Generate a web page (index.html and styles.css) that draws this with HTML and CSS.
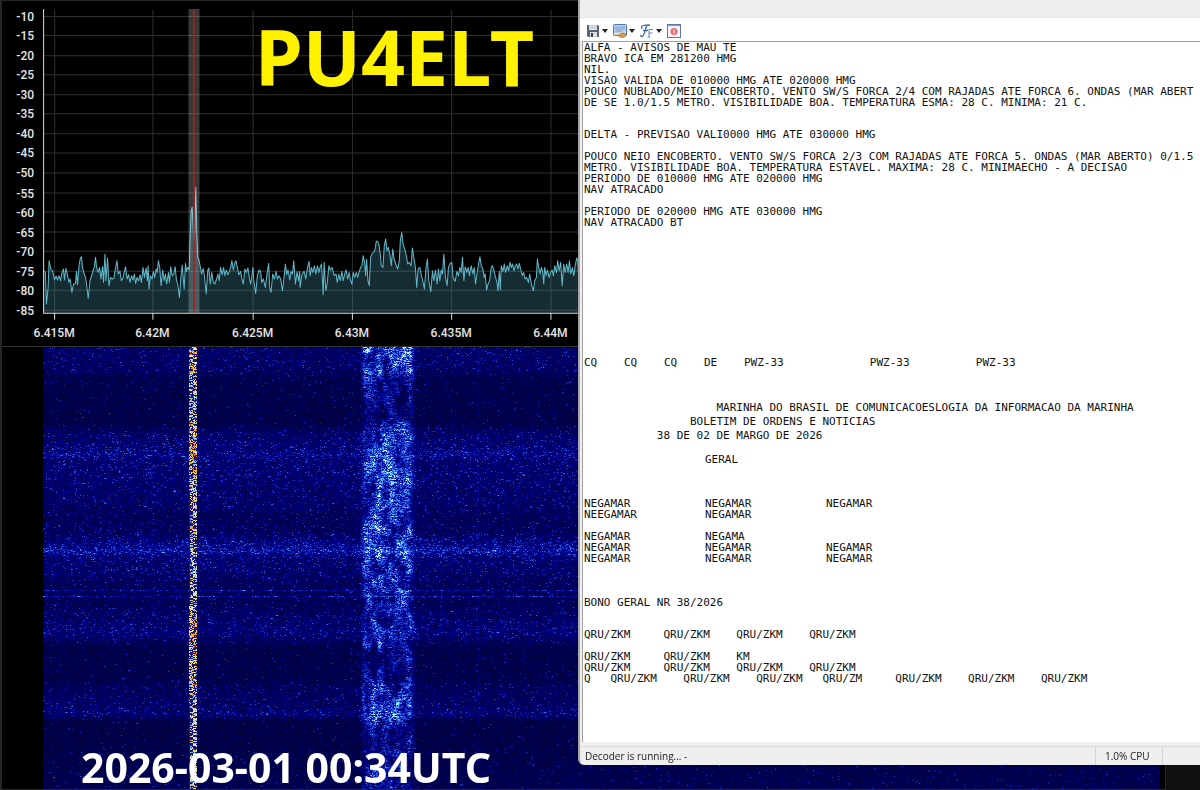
FILE: index.html
```html
<!DOCTYPE html>
<html lang="pt-BR">
<head>
    <meta charset="UTF-8">
    <meta name="viewport" content="width=device-width, initial-scale=1.0">
    <title>PU4ELT</title>
    <link rel="stylesheet" href="styles.css">
</head>
<body>

<main class="receiver">
    <div class="display">
        <svg id="spectrum" class="spectrum" viewBox="0 0 1160 346" preserveAspectRatio="xMinYMin slice"></svg>
        <div class="waterfall">
            <canvas id="waterfall"></canvas>
        </div>
    </div>
    <div class="side-panel"></div>
</main>

<h1 class="callsign">PU4ELT</h1>
<time class="timestamp" datetime="2026-03-01T00:34Z">2026-03-01 00:34UTC</time>

<section class="decoder">
    <div class="titlebar"></div>
    <div class="toolbar">
        <button type="button" aria-label="Save">
            <svg width="14" height="14" viewBox="0 0 14 14">
                <path d="M1 1h11l1 1v11H2l-1-1z" fill="#5c6470"/>
                <path d="M3 1h8v5H3z" fill="#e9edf2"/>
                <path d="M3 2h8M3 4h8" stroke="#b5bcc6" stroke-width="1"/>
                <path d="M4 8h7v5H4z" fill="#d7dbe0"/>
                <path d="M5 9h2v4H5z" fill="#39404a"/>
            </svg>
            <svg class="arrow" width="6" height="4" viewBox="0 0 6 4"><path d="M0 0h6L3 4z"/></svg>
        </button>
        <button type="button" aria-label="Image">
            <svg width="14" height="14" viewBox="0 0 14 14">
                <rect x="0.500" y="0.500" width="13" height="11" rx="1" fill="#b9d0ee" stroke="#5577a8"/>
                <path d="M2 3h10M2 5h10M2 7h7" stroke="#7f9dca"/>
                <path d="M1 9h5l2-1 3 1 2-1v3H1z" fill="#e6dcae"/>
                <path d="M6 11l3-2 4 1v2l-3 1.500-4-.5z" fill="#d39a5c" stroke="#94602c" stroke-width=".6"/>
            </svg>
            <svg class="arrow" width="6" height="4" viewBox="0 0 6 4"><path d="M0 0h6L3 4z"/></svg>
        </button>
        <button type="button" aria-label="Font">
            <svg width="14" height="14" viewBox="0 0 14 14" fill="none" stroke="#44689c">
                <path d="M2 5C0 1 5 1 10 1M7 1.500C5 4 5 12 2 12.500 1 12.600.500 12 1 11M3 6.500h5" stroke-width="1.300"/>
                <path d="M9 13V5.500H13M9 9h3.500M7.500 13h3" stroke="#6285b8"/>
            </svg>
            <svg class="arrow" width="6" height="4" viewBox="0 0 6 4"><path d="M0 0h6L3 4z"/></svg>
        </button>
        <button type="button" aria-label="Stop">
            <svg width="14" height="14" viewBox="0 0 14 14">
                <rect x="0.500" y="0.500" width="13" height="13" fill="#f3f4fa" stroke="#5b78a8"/>
                <path d="M1 1.500h12" stroke="#7f9ccc"/>
                <circle cx="7" cy="7.500" r="3.500" fill="#ee6a70"/>
                <path d="M7 5.500v4" stroke="#fff" stroke-width="1.200"/>
            </svg>
        </button>
    </div>
    <div class="messages">
        <pre class="gap-m">ALFA - AVISOS DE MAU TE
BRAVO ICA EM 281200 HMG
NIL.
VISAO VALIDA DE 010000 HMG ATE 020000 HMG
POUCO NUBLADO/MEIO ENCOBERTO. VENTO SW/S FORCA 2/4 COM RAJADAS ATE FORCA 6. ONDAS (MAR ABERT
DE SE 1.0/1.5 METRO. VISIBILIDADE BOA. TEMPERATURA ESMA: 28 C. MINIMA: 21 C.</pre>
        <pre class="gap-s">DELTA - PREVISAO VALI0000 HMG ATE 030000 HMG</pre>
        <pre class="gap-s">POUCO NEIO ENCOBERTO. VENTO SW/S FORCA 2/3 COM RAJADAS ATE FORCA 5. ONDAS (MAR ABERTO) 0/1.5
METRO. VISIBILIDADE BOA. TEMPERATURA ESTAVEL. MAXIMA: 28 C. MINIMAECHO - A DECISAO
PERIODO DE 010000 HMG ATE 020000 HMG
NAV ATRACADO</pre>
        <pre class="gap-xl">PERIODO DE 020000 HMG ATE 030000 HMG
NAV ATRACADO BT</pre>
        <pre class="call gap-l">CQ&#9;CQ&#9;CQ&#9;DE&#9;PWZ-33             PWZ-33          PWZ-33</pre>
        <pre class="heading gap-s">                    MARINHA DO BRASIL DE COMUNICACOESLOGIA DA INFORMACAO DA MARINHA
                BOLETIM DE ORDENS E NOTICIAS
           38 DE 02 DE MARGO DE 2026</pre>
        <pre class="columns gap-l">&#9;GERAL</pre>
        <pre class="columns gap-l">NEGAMAR&#9;NEGAMAR&#9;NEGAMAR
NEEGAMAR&#9;NEGAMAR

NEGAMAR&#9;NEGAMA
NEGAMAR&#9;NEGAMAR&#9;NEGAMAR
NEGAMAR&#9;NEGAMAR&#9;NEGAMAR</pre>
        <pre class="gap-m">BONO GERAL NR 38/2026</pre>
        <pre>QRU/ZKM     QRU/ZKM    QRU/ZKM    QRU/ZKM

QRU/ZKM     QRU/ZKM    KM
QRU/ZKM     QRU/ZKM    QRU/ZKM    QRU/ZKM
Q   QRU/ZKM    QRU/ZKM    QRU/ZKM   QRU/ZM     QRU/ZKM    QRU/ZKM    QRU/ZKM</pre>
    </div>
    <footer class="statusbar">
        <span class="status">Decoder is running... -</span>
        <span class="cpu">1.0% CPU</span>
        <span class="grip"></span>
    </footer>
</section>

<script src="script.js"></script>
</body>
</html>
```

FILE: styles.css
```css
* {
    box-sizing: border-box;
}
body {
    margin: 0;
    height: 100vh;
    background: #000;
    position: relative;
    overflow: hidden;
}
.receiver {
    display: grid;
    grid-template-columns: 1fr 34px;
    height: 100%;
}
.display {
    display: flex;
    flex-direction: column;
    min-width: 0;
    border: 1px solid #262626;
    border-left-width: 2px;
}
.spectrum {
    display: block;
    width: 100%;
    height: 346px;
    flex: none;
    border-bottom: 1px solid #333;
    font: 500 12px Roboto, sans-serif;
    fill: #e4e4e4;
}
.grid {
    stroke: #303030;
}
.axis {
    stroke: #dcdcdc;
}
.trace-fill {
    fill: #4aa3b2;
    fill-opacity: 0.28;
}
.trace {
    fill: none;
    stroke: #62b9cb;
    stroke-linejoin: round;
}
.waterfall {
    flex: 1;
    min-height: 0;
    padding: 0 6px 0 41px;
}
.waterfall canvas {
    display: block;
    width: 100%;
    height: 100%;
}
.side-panel {
    background: #101010;
}

/* captions over the receiver */
.callsign,
.timestamp {
    position: absolute;
    margin: 0;
    font-family: "Noto Sans", "Open Sans", sans-serif;
    font-weight: 700;
    white-space: nowrap;
}
.callsign {
    top: 17px;
    left: 255px;
    font-size: 77px;
    line-height: 80px;
    color: #fff200;
}
.timestamp {
    left: 81px;
    bottom: 0;
    font-size: 41px;
    line-height: 46px;
    color: #fff;
}

/* decoder window */
.decoder {
    position: absolute;
    top: 0;
    right: 0;
    bottom: 25px;
    left: 578px;
    display: flex;
    flex-direction: column;
    background: #efefef;
    border-left: 2px solid #a6a6aa;
    border-bottom-left-radius: 6px;
    overflow: hidden;
}
.titlebar {
    height: 18px;
    border-bottom: 1px solid #e6e6e6;
}
.toolbar {
    display: flex;
    gap: 5px;
    height: 23px;
    padding: 2px 6px 0;
    align-items: center;
    background: #fff;
}
.toolbar button {
    display: flex;
    align-items: center;
    gap: 2px;
    padding: 0;
    border: 0;
    background: none;
}
.arrow {
    fill: #222;
}
.messages {
    flex: 1;
    margin-left: 2px;
    padding-left: 1px;
    background: #fff;
    border-top: 1px solid #a0a0a0;
    border-left: 1px solid #a0a0a0;
    overflow: hidden;
}
.messages pre {
    margin: 0;
    font: 11px/11px "DejaVu Sans Mono", monospace;
    color: #111;
}
.messages .heading {
    line-height: 14px;
}
.messages .call {
    tab-size: 40px;
}
.messages .columns {
    tab-size: 121px;
}
.messages .gap-s {
    margin-bottom: 11px;
}
.messages .gap-m {
    margin-bottom: 21px;
}
.messages .gap-l {
    margin-bottom: 33px;
}
.messages .gap-xl {
    margin-bottom: 129px;
}
.statusbar {
    display: flex;
    height: 23px;
    padding-top: 4px;
    font: 10px/18px "Open Sans", sans-serif;
    color: #222;
}
.statusbar span {
    border-top: 1px solid #dcdcdc;
}
.status {
    flex: 1;
    padding-left: 5px;
}
.cpu {
    width: 68px;
    padding-left: 9px;
    border-left: 1px solid #d4d4d4;
    border-right: 1px solid #d4d4d4;
}
.grip {
    width: 37px;
}
```

FILE: script.js
```js
// trace samples in thirds of a pixel, x,y pairs
var traceLow = '130,810 136,815 139,910 144,860 147,780 152,805 158,812 163,838 168,826 172,838 177,825 181,840 185,818 190,805 193,838 197,803 202,822 206,845 210,835 215,875 220,850 226,848 229,812 232,852 237,790 241,772 244,768 247,800 252,820 256,830 259,850 264,893 269,840 274,826 278,810 282,800 286,770 289,800 294,815 298,800 302,835 307,797 310,845 314,760 317,840 322,772 326,855 331,830 336,835 341,832 345,805 350,780 354,820 359,812 363,840 368,832 372,812 376,798 380,835 385,822 389,845 394,825 398,838 402,820 406,848 410,830 415,840 419,822 423,845 428,800 432,830 437,802 441,840 443,795 446,865 450,825 455,835 459,812 463,830 467,805 470,815 474,780 478,800 482,855 487,808 491,840 495,820 499,850 504,815 507,845 511,798 515,825 520,820 524,798 528,838 532,850 537,890 541,835 545,793 548,830 551,865 555,788 558,812 562,800 566,806 569,700 572,630 575,620 577,660 580,720 583,690 586,560 589,700 592,770 595,778 598,790 603,820 608,803 612,828 617,880 622,808 625,802 629,850 634,815 638,845 643,850 648,835 652,820 656,840 660,800 665,822 669,800 673,825 677,808 682,822 686,812 690,800 694,780 698,808 702,788 706,780 710,800 715,822 720,812 724,835 728,850 733,805 737,815 742,802 746,830 750,850 754,825 757,800 760,845 765,878 770,825 775,808 780,812 783,845 788,835 794,860 799,820 804,788 807,860 811,875 816,820 821,835 826,812 830,835 835,825 840,835 845,870 850,830 854,790 858,822 862,808 867,838 871,812 875,820 879,780 884,850 889,812 893,840 897,812';
var traceHigh = '28,860 34,820 40,812 45,835 50,800 55,782 58,825 62,800 66,815 71,795 75,820 80,795 84,815 88,800 92,790 95,845 97,882 100,785 105,870 109,850 114,795 118,808 124,800 130,825 136,820 139,845 144,820 148,840 153,812 157,840 162,818 166,808 170,835 175,815 179,840 183,850 187,815 191,830 196,815 200,830 205,812 209,800 213,795 217,765 221,785 224,825 227,775 231,840 235,855 239,770 244,758 248,755 252,748 256,722 260,722 264,732 268,760 271,795 276,800 280,735 284,715 288,750 292,740 297,765 301,795 305,745 309,775 314,790 320,805 325,780 328,720 332,695 336,730 341,745 346,765 350,790 355,785 360,795 364,742 368,770 373,800 377,860 381,805 386,800 390,820 396,845 400,865 405,800 409,775 413,840 419,873 424,810 428,840 433,808 438,850 442,805 446,840 450,808 454,820 458,760 463,830 468,855 472,800 476,790 482,785 486,830 492,842 497,812 502,825 506,800 510,815 514,770 518,840 522,798 527,815 531,800 535,825 540,795 545,820 549,800 553,850 557,820 562,790 566,768 570,795 575,805 579,830 582,820 586,868 590,850 595,840 600,800 604,795 608,810 613,830 617,845 620,870 624,812 627,868 630,795 635,812 639,790 643,815 648,795 652,810 656,785 660,800 664,790 668,810 672,795 676,790 680,805 684,788 688,805 693,825 697,815 701,835 706,830 711,845 715,820 720,850 726,870 730,840 735,830 738,775 742,800 746,820 750,800 754,812 757,850 760,800 764,825 768,808 773,830 777,815 782,808 786,825 790,795 795,815 799,780 803,810 808,785 812,855 817,790 821,815 826,790 830,815 834,780 838,820 843,800 847,825 851,795 856,772 859,780 863,855 866,860';

function points(data, offset) {
    return data.split(' ').map(function(pair) {
        var p = pair.split(',').map(Number);
        return [(p[0] + offset) / 3 - 2, p[1] / 3 - 1];
    });
}

function drawSpectrum() {
    var grid = '', axis = 'M41.5 8V311.5H1160', labels = '';
    for (var i = 0; i < 16; i++) {
        var y = Math.round(14.6 + i * 19.55);
        grid += 'M42 ' + (y + 0.5) + 'H1160';
        labels += '<text x="32" y="' + (y + 5) + '" text-anchor="end">-' + (10 + i * 5) + '</text>';
    }
    ['6.415M', '6.42M', '6.425M', '6.43M', '6.435M', '6.44M'].forEach(function(name, i) {
        var x = Math.round(52.2 + i * 99);
        if (i == 1) x -= 1;
        grid += 'M' + (x + 0.5) + ' 9V311';
        axis += 'M' + (x + 0.5) + ' 312V318';
        labels += '<text x="' + x + '" y="335" text-anchor="middle">' + name + '</text>';
    });
    var line = points(traceLow, 0).concat(points(traceHigh, 870)).map(function(p) {
        return p[0].toFixed(1) + ' ' + p[1].toFixed(1);
    }).join('L');
    document.getElementById('spectrum').innerHTML =
        '<path class="grid" d="' + grid + '"/>' +
        '<path class="trace-fill" d="M41 311L' + line + 'V311z"/>' +
        '<path class="trace" d="M' + line + '"/>' +
        '<rect x="186" y="8" width="11" height="303" fill="#fff" fill-opacity="0.22"/>' +
        '<path d="M191.5 8V311" stroke="#a82020" stroke-width="1.5"/>' +
        '<path class="axis" fill="none" d="' + axis + '"/>' + labels;
}

var seed = 4222;
function rnd() {
    seed = (seed * 1664525 + 1013904223) >>> 0;
    return seed / 4294967296;
}

// linear interpolation over [position, value] stops
function ramp(stops, t) {
    for (var i = 1; i < stops.length; i++) {
        if (t <= stops[i][0]) {
            var a = stops[i - 1], b = stops[i];
            return a[1] + (b[1] - a[1]) * (t - a[0]) / (b[0] - a[0]);
        }
    }
    return stops[stops.length - 1][1];
}

function noiseMap(w, h) {
    var cells = [];
    for (var i = 0; i < w * h; i++) cells.push(rnd());
    return function(x, y) {
        var xi = Math.floor(x), yi = Math.floor(y), fx = x - xi, fy = y - yi;
        function at(a, b) { return cells[(b % h) * w + (a % w)]; }
        return (at(xi, yi) * (1 - fx) + at(xi + 1, yi) * fx) * (1 - fy) +
            (at(xi, yi + 1) * (1 - fx) + at(xi + 1, yi + 1) * fx) * fy;
    };
}

var rowLevel = [[0, .45], [22, .4], [32, .16], [76, .12], [86, .44], [100, .58], [108, .76], [114, .52], [134, .54], [142, .48], [158, .44], [170, .3], [184, .34], [192, .58], [204, .95], [210, .56], [224, .48], [236, .32], [254, .26], [270, .44], [285, .6], [292, .4], [300, .14], [332, .14], [342, .34], [356, .4], [366, .58], [369, .46], [373, .08], [400, .1], [442, .2]];
var bandLevel = [[0, 1], [26, .9], [34, .55], [70, .5], [86, .8], [120, .9], [160, .75], [190, .95], [210, 1.1], [226, .85], [270, .7], [294, .8], [305, .5], [330, .6], [345, .9], [372, 1], [380, .6], [410, .5], [442, .75]];
var warmLevel = [[0, .4], [60, .35], [90, .8], [114, .95], [124, .4], [160, .2], [250, .1], [262, .4], [288, .9], [300, .35], [345, .5], [360, .2], [380, .02], [442, .1]];

var red = [[0, 0], [.3, 0], [.5, 38], [.7, 70], [.85, 120], [1, 225]];
var green = [[0, 0], [.22, 0], [.4, 45], [.55, 95], [.7, 150], [.85, 210], [1, 245]];
var blue = [[0, 48], [.2, 128], [.4, 195], [.6, 245], [1, 255]];

function drawWaterfall() {
    var canvas = document.getElementById('waterfall');
    var w = canvas.width = canvas.clientWidth;
    var h = canvas.height = canvas.clientHeight;
    var ctx = canvas.getContext('2d');
    var image = ctx.createImageData(w, h);
    var blobs = noiseMap(61, 67), fine = noiseMap(127, 251);

    function put(x, y, r, g, b) {
        var i = (y * w + x) * 4;
        image.data[i] = r;
        image.data[i + 1] = g;
        image.data[i + 2] = b;
        image.data[i + 3] = 255;
    }

    for (var y = 0; y < h; y++) {
        var level = ramp(rowLevel, y);
        if (y == 243 || y == 249) level = .85;
        var last = 0;
        for (var x = 0; x < w; x++) {
            var r = rnd();
            var v = .04 + level * .2 + (rnd() - .5) * (.09 + level * .22);
            if (r > 1 - .01 - level * level * .2) v += .15 + rnd() * .45;
            if (x >= 434 && x <= 435 && rnd() < .3) v += .15;
            // wide signal around 6.4315M
            if (x > 317 && x < 372) {
                var edge = Math.min(1, (x - 316) / 5, (372 - x) / 5);
                var n = blobs(x / 6, y / 13) * .65 + fine(x / 2.5, y / 4) * .35;
                var s = Math.max(0, n - .22) * 1.65 * ramp(bandLevel, y) * edge;
                v += s * (rnd() < .5 ? .15 : .6 + rnd() * .8);
            }
            v = last = Math.max(0, Math.min(1, v * .68 + last * .32));
            put(x, y, ramp(red, v), ramp(green, v), ramp(blue, v));
        }
        // FSK carrier, mark on one side and space on the other
        var warm = ramp(warmLevel, y), mark = rnd() < .5, hot = rnd() < warm;
        for (var c = 146; c < 154; c++) {
            var on = mark ? c < 150 : c > 149;
            if (rnd() < .1 + warm * .25) on = !on;
            if (!on || (c == 146 && warm < .3)) {
                put(c, y, 25, 20, 85 + rnd() * 60);
            } else if (hot && rnd() < .7) {
                put(c, y, 255, 110 + rnd() * 130, rnd() * 60);
            } else {
                var k = rnd();
                if (k < .35) put(c, y, 120, 180, 225);
                else if (k < .65) put(c, y, 235, 220, 120);
                else put(c, y, 235, 235, 220);
            }
        }
    }
    ctx.putImageData(image, 0, 0);
}

drawSpectrum();
drawWaterfall();
```
